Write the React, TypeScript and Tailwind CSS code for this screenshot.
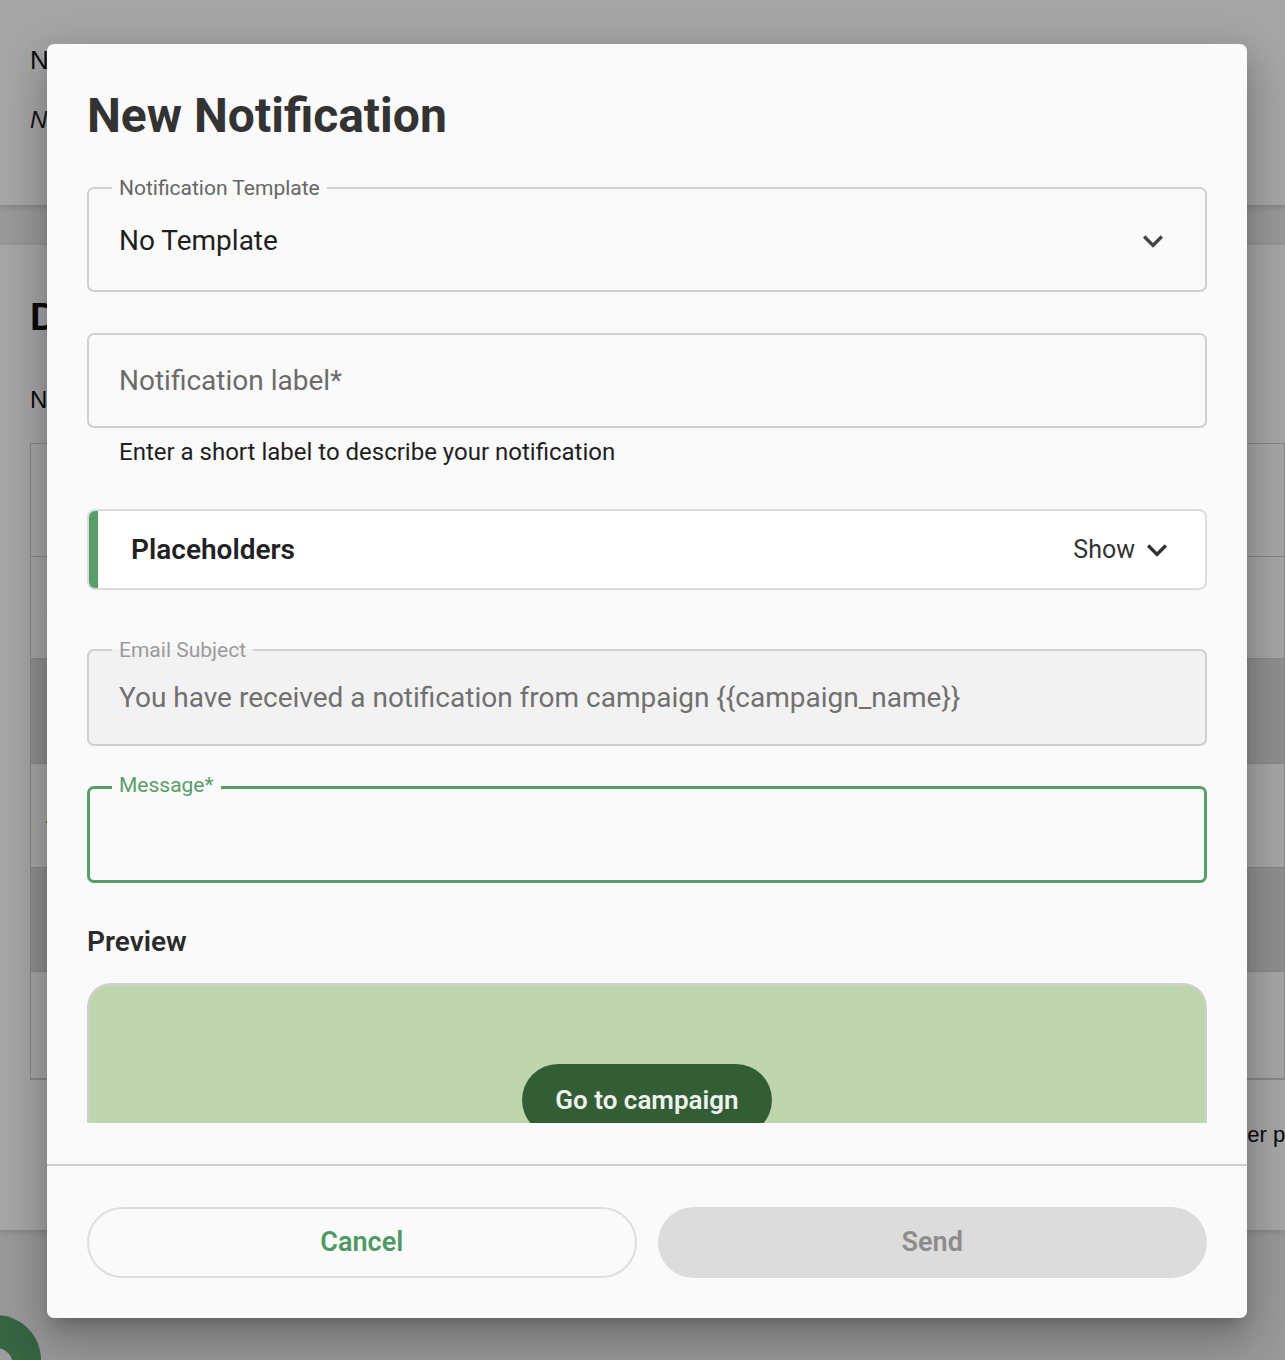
import React from "react"

function ExpandMore({ className = "" }: { className?: string }) {
  return (
    <svg viewBox="0 0 24 24" className={className} fill="currentColor" aria-hidden="true">
      <path d="M16.59 8.59 12 13.17 7.41 8.59 6 10l6 6 6-6z" />
    </svg>
  )
}

const rows = [
  { h: "h-[113px]", bg: "bg-white", text: "" },
  { h: "h-[102px]", bg: "bg-white", text: "-" },
  { h: "h-[105px]", bg: "bg-[#dcdcdc]", text: "" },
  { h: "h-[104px]", bg: "bg-white", text: "Active" },
  { h: "h-[104px]", bg: "bg-[#dcdcdc]", text: "" },
  { h: "h-[107px]", bg: "bg-white", text: "" },
]

function BackgroundPage() {
  return (
    <div className="h-[1360px] bg-[#ebebeb] font-['Liberation_Sans',Arial,sans-serif] text-[#111]">
      <div className="h-[205px] bg-white shadow-[0_2px_6px_rgba(0,0,0,0.15)] pl-[30px] pt-[44px]">
        <div className="text-[26px] leading-[32px]">Notifications</div>
        <div className="mt-[28px] text-[24px] leading-[32px] italic text-[#222]">Notify campaign members</div>
      </div>
      <div className="mt-[40px] h-[985px] bg-white shadow-[0_2px_6px_rgba(0,0,0,0.15)] overflow-hidden">
        <div className="pl-[30px] pt-[50px] text-[38px] font-bold leading-[44px]">Delivered notifications</div>
        <div className="pl-[30px] mt-[45px] text-[24px] leading-[32px]">No notifications sent yet</div>
        <div className="ml-[30px] mt-[27px] border border-[#cfcfcf] flex flex-col">
          {rows.map((r, i) => (
            <div key={i} className={`${r.h} ${r.bg} border-b border-[#cfcfcf] flex items-center pl-[15px] text-[22px]`}>
              {r.text}
            </div>
          ))}
        </div>
        <div className="mt-[38px] pl-[1174px] whitespace-nowrap text-[22px]">Rows per page: 10</div>
      </div>
    </div>
  )
}

function Dialog() {
  return (
    <div className="absolute left-[47px] top-[44px] w-[1200px] h-[1274px] rounded-[7px] bg-[#fafafa] flex flex-col font-['Roboto',sans-serif] shadow-[0_11px_15px_-7px_rgba(0,0,0,0.2),0_24px_38px_3px_rgba(0,0,0,0.14),0_9px_46px_8px_rgba(0,0,0,0.12)]">
      <div className="h-[1079px] overflow-hidden px-10 pt-[48px]">
        <h1 className="text-[48px] leading-[48px] font-bold text-[#333]">New Notification</h1>

        <fieldset className="mt-[37px] h-[115px] border-2 border-[#d0d0d0] rounded-[7px] px-[30px] pb-[7px]">
          <legend className="ml-[-7px] px-[7px] text-[21px] leading-[22px] text-[#666]">Notification Template</legend>
          <div className="h-[84px] flex items-center justify-between">
            <span className="text-[28px] text-[#1f1f1f]">No Template</span>
            <ExpandMore className="w-[40px] h-[40px] text-[#444] mr-[2px]" />
          </div>
        </fieldset>

        <div className="mt-[41px] h-[95px] border-2 border-[#d0d0d0] rounded-[7px] px-[30px] flex items-center">
          <span className="text-[28px] text-[#6b6b6b]">Notification label*</span>
        </div>
        <p className="pl-[32px] mt-[10px] text-[24px] leading-[28px] text-[#1f1f1f]">Enter a short label to describe your notification</p>

        <div className="mt-[43px] h-[81px] flex rounded-[8px] border-2 border-[#dcdcdc] bg-white overflow-hidden">
          <div className="w-[9px] bg-[#599e69]" />
          <div className="flex-1 flex items-center justify-between pl-[33px] pr-[28px]">
            <span className="text-[28px] font-semibold text-[#222]">Placeholders</span>
            <span className="flex items-center gap-[2px] text-[25px] text-[#333]">
              Show
              <ExpandMore className="w-[40px] h-[40px] text-[#333]" />
            </span>
          </div>
        </div>

        <fieldset className="mt-[49px] h-[107px] border-2 border-[#d0d0d0] rounded-[7px] bg-[#f2f2f2] px-[30px] pb-[9px]">
          <legend className="ml-[-7px] px-[7px] text-[21px] leading-[22px] text-[#9a9a9a]">Email Subject</legend>
          <div className="h-[74px] flex items-center text-[28px] text-[#707070]">
            You have received a notification from campaign {"{{campaign_name}}"}
          </div>
        </fieldset>

        <fieldset className="mt-[30px] h-[107px] border-[3px] border-[#599e69] rounded-[7px] px-[29px]">
          <legend className="ml-[-7px] px-[7px] text-[21px] leading-[22px] text-[#599e69] -translate-y-[2px]">Message*</legend>
        </fieldset>

        <h2 className="mt-[43px] text-[28px] leading-[32px] font-semibold text-[#2b2b2b]">Preview</h2>

        <div className="mt-[25px] h-[200px] rounded-t-[24px] border-2 border-b-0 border-[#cfcfcf] bg-[#bfd5ae] flex justify-center pt-[79px]">
          <div className="h-[72px] px-[33px] rounded-full bg-[#335e35] text-[#eef2ee] text-[26px] font-semibold flex items-center">
            Go to campaign
          </div>
        </div>
      </div>

      <div className="h-[41px]" />

      <div className="border-t-2 border-[#cfcfcf] px-10 pt-[41px] pb-[40px] grid grid-cols-2 gap-[21px]">
        <button className="h-[71px] rounded-full border-2 border-[#dedede] bg-[#fafafa] text-[27px] font-semibold text-[#4f9a64]">
          Cancel
        </button>
        <button className="h-[71px] rounded-full bg-[#dcdcdc] text-[27px] font-semibold text-[#8c8c8c]">
          Send
        </button>
      </div>
    </div>
  )
}

export default function App() {
  return (
    <div className="relative h-[1360px] overflow-hidden">
      <BackgroundPage />
      <div className="absolute left-[-49px] top-[1315px] w-[90px] h-[90px] rounded-full bg-[#559a68] flex items-center justify-center">
        <div className="w-[34px] h-[34px] rounded-full bg-[#f2f2f2] mt-[10px]" />
      </div>
      <div className="absolute inset-0 bg-black/35" />
      <Dialog />
    </div>
  )
}
